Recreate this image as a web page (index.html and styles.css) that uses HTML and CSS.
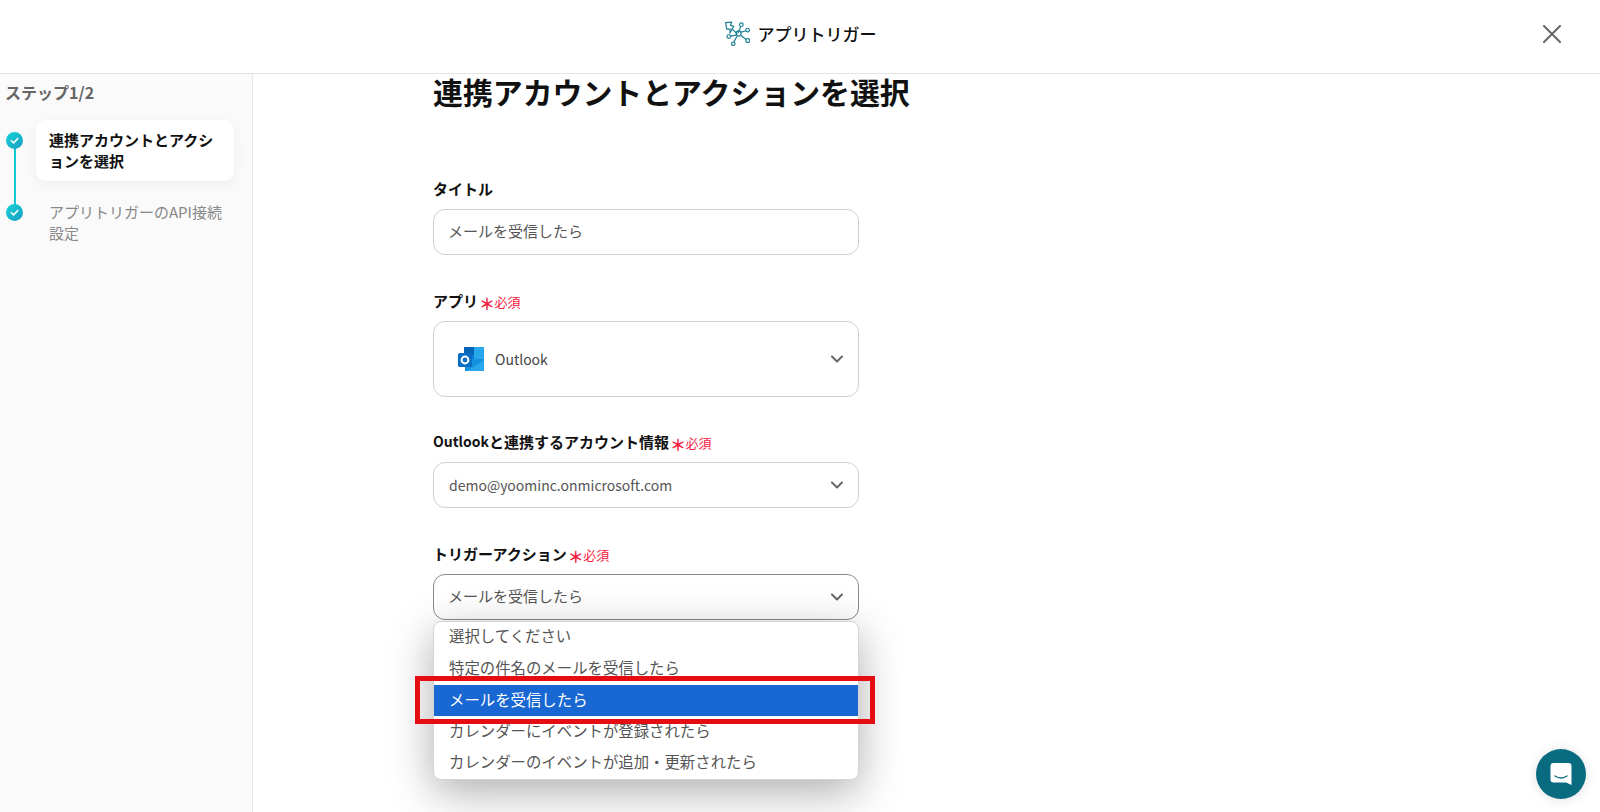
FILE: index.html
```html
<!DOCTYPE html>
<html lang="ja">

<head>
    <meta charset="UTF-8">
    <meta name="viewport" content="width=device-width, initial-scale=1.0">
    <title>アプリトリガー</title>
    <link rel="stylesheet" href="styles.css">
</head>

<body>
    <header class="topbar">
        <div class="brand">
            <svg class="brand-icon" viewBox="0 0 24 24" fill="none" stroke="#1f7f96" stroke-width="1.1">
                <path d="M1.5 1.5 L7 1 L6 4 L9 5 L5.5 11 L5.5 7.5 L2.5 7.5 Z" />
                <path d="M7 7 L12.5 12 M13 11 L15.5 5 M15 13 L20.5 17 M15 10.5 L20.5 9 M12 14 L9 19.5 M11 13 L6 14" />
                <circle cx="13.5" cy="11.5" r="2.3" />
                <circle cx="16" cy="3.4" r="1.7" />
                <circle cx="21.8" cy="8.4" r="1.7" />
                <circle cx="22" cy="18" r="1.8" />
                <circle cx="8.6" cy="21" r="1.6" />
                <circle cx="4.4" cy="14.4" r="1.7" />
            </svg>
            <span class="brand-name">アプリトリガー</span>
        </div>
        <svg class="close-icon" viewBox="0 0 18 18" stroke="#666" stroke-width="2" stroke-linecap="round">
            <path d="M1 1 L17 17 M17 1 L1 17" />
        </svg>
    </header>

    <div class="layout">
        <aside class="sidebar">
            <div class="step-count">ステップ1/2</div>
            <ol class="steps">
                <li class="step step-active">
                    <span class="step-mark">
                        <svg viewBox="0 0 18 18" fill="none" stroke="#fff" stroke-width="1.6" stroke-linecap="round" stroke-linejoin="round">
                            <path d="M5.5 9.2 L8 11.5 L12.5 6.8" />
                        </svg>
                    </span>
                    <div class="step-text">連携アカウントとアクションを選択</div>
                </li>
                <li class="step">
                    <span class="step-mark">
                        <svg viewBox="0 0 18 18" fill="none" stroke="#fff" stroke-width="1.6" stroke-linecap="round" stroke-linejoin="round">
                            <path d="M5.5 9.2 L8 11.5 L12.5 6.8" />
                        </svg>
                    </span>
                    <div class="step-text">アプリトリガーのAPI接続設定</div>
                </li>
            </ol>
        </aside>

        <main class="content">
            <h1 class="page-title">連携アカウントとアクションを選択</h1>

            <div class="field field-first">
                <div class="field-label">タイトル</div>
                <div class="control"><span class="control-text">メールを受信したら</span></div>
            </div>

            <div class="field">
                <div class="field-label">アプリ<span class="req-star">＊</span><span class="req-text">必須</span></div>
                <div class="control control-app">
                    <svg class="outlook-icon" viewBox="0 0 28 26">
                        <rect x="7" y="1" width="20" height="8" fill="#0364b8" />
                        <rect x="7" y="9" width="10" height="8" fill="#0a78d4" />
                        <rect x="17" y="1" width="10" height="8" fill="#28a8ea" />
                        <rect x="17" y="9" width="10" height="8" fill="#28a8ea" />
                        <path d="M8 13 L27 13 L27 25 L8 25 Z" fill="#1490df" />
                        <path d="M27 14 L27 25 L10 25 Z" fill="#28a8ea" />
                        <rect x="1" y="7" width="14" height="14" rx="1.5" fill="#0a6fc4" />
                        <circle cx="8" cy="14" r="3.4" fill="none" stroke="#fff" stroke-width="2" />
                    </svg>
                    <span class="latin">Outlook</span>
                    <svg class="chevron" viewBox="0 0 12 8" fill="none" stroke="#666" stroke-width="2" stroke-linecap="round" stroke-linejoin="round">
                        <path d="M1 1.5 L6 6.5 L11 1.5" />
                    </svg>
                </div>
            </div>

            <div class="field field-account">
                <div class="field-label"><span class="latin">Outlook</span>と連携するアカウント情報<span class="req-star">＊</span><span class="req-text">必須</span></div>
                <div class="control control-select">
                    <span class="latin">demo@yoominc.onmicrosoft.com</span>
                    <svg class="chevron" viewBox="0 0 12 8" fill="none" stroke="#666" stroke-width="2" stroke-linecap="round" stroke-linejoin="round">
                        <path d="M1 1.5 L6 6.5 L11 1.5" />
                    </svg>
                </div>
            </div>

            <div class="field field-open">
                <div class="field-label">トリガーアクション<span class="req-star">＊</span><span class="req-text">必須</span></div>
                <div class="control control-select control-focus">
                    <span class="control-text">メールを受信したら</span>
                    <svg class="chevron" viewBox="0 0 12 8" fill="none" stroke="#666" stroke-width="2" stroke-linecap="round" stroke-linejoin="round">
                        <path d="M1 1.5 L6 6.5 L11 1.5" />
                    </svg>
                </div>
                <ul class="menu">
                    <li class="menu-item">選択してください</li>
                    <li class="menu-item">特定の件名のメールを受信したら</li>
                    <li class="menu-item menu-item-selected">メールを受信したら</li>
                    <li class="menu-item">カレンダーにイベントが登録されたら</li>
                    <li class="menu-item">カレンダーのイベントが追加・更新されたら</li>
                </ul>
                <div class="callout"></div>
            </div>
        </main>
    </div>

    <div class="chat-button">
        <svg viewBox="0 0 24 24" width="24" height="24">
            <path d="M4.5 1 H19.5 A3 3 0 0 1 22.5 4 V23 L17 20.5 H4.5 A3 3 0 0 1 1.5 17.5 V4 A3 3 0 0 1 4.5 1 Z" fill="#fff" />
            <path d="M6 14 Q12 18 18 14" fill="none" stroke="#086b80" stroke-width="1.4" stroke-linecap="round" />
        </svg>
    </div>
</body>

</html>
```

FILE: styles.css
```css
* {
    box-sizing: border-box;
}

html, body {
    height: 100%;
}

body {
    margin: 0;
    background-color: white;
    color: #222;
    font-family: "Noto Sans CJK JP", "Noto Sans", sans-serif;
    overflow: hidden;
}

.latin {
    font-size: 14px;
}

.topbar {
    height: 74px;
    border-bottom: 1px solid #e4e4e4;
    display: flex;
    justify-content: center;
    align-items: center;
    position: relative;
}

.brand {
    display: flex;
    align-items: center;
    gap: 8px;
    margin-top: -6px;
}

.brand-icon {
    width: 26px;
    height: 26px;
}

.brand-name {
    font-size: 17px;
    font-weight: 500;
    color: #111;
}

.close-icon {
    position: absolute;
    right: 39px;
    top: 25px;
    width: 18px;
    height: 18px;
}

.layout {
    display: flex;
    height: calc(100% - 74px);
}

.sidebar {
    width: 253px;
    flex-shrink: 0;
    background-color: #fafafa;
    border-right: 1px solid #e8e8e8;
    padding: 7px 18px 0 6px;
}

.step-count {
    margin-left: -1px;
    font-size: 16px;
    font-weight: 700;
    line-height: 22px;
    color: #666;
}

.steps {
    list-style: none;
    margin: 17px 0 0;
    padding: 0;
}

.step {
    display: flex;
    align-items: flex-start;
    gap: 13px;
    position: relative;
    margin-bottom: 11px;
}

.step-mark {
    flex-shrink: 0;
    width: 17px;
    height: 17px;
    margin-top: 12px;
    border-radius: 50%;
    background: linear-gradient(135deg, #17d3d9, #1a9cc0);
    position: relative;
    z-index: 1;
}

.step-mark svg {
    display: block;
    width: 17px;
    height: 17px;
}

.step-active::after {
    content: "";
    position: absolute;
    left: 7.5px;
    top: 24px;
    width: 2px;
    height: 66px;
    background-color: #14c8d6;
}

.step-text {
    flex: 1;
    padding: 9px 4px 9px 13px;
    font-size: 15px;
    line-height: 21.4px;
    color: #888;
}

.step-active .step-text {
    padding-right: 13px;
    background-color: white;
    border-radius: 10px;
    font-weight: 700;
    color: #111;
    box-shadow: 0 4px 14px rgba(0, 0, 0, 0.05);
}

.content {
    flex: 1;
    padding-left: 180px;
}

.page-title {
    margin: -3px 0 0;
    font-size: 29.9px;
    line-height: 40px;
    font-weight: 700;
    color: #111;
}

.field {
    width: 426px;
    margin-top: 36px;
}

.field-first {
    margin-top: 68px;
}

.field-account {
    margin-top: 35px;
}

.field-open {
    position: relative;
}

.field-label {
    display: flex;
    align-items: center;
    height: 20px;
    margin-bottom: 10px;
    padding-bottom: 2px;
    font-size: 15px;
    font-weight: 700;
    color: #111;
}

.req-star {
    margin-top: 6px;
    margin-left: 1px;
    font-size: 16px;
    font-weight: 700;
    line-height: 16px;
    color: #f5223f;
}

.req-text {
    margin-top: 2px;
    margin-left: -0.5px;
    font-size: 13px;
    font-weight: 400;
    color: #f5223f;
}

.control {
    display: flex;
    align-items: center;
    height: 46px;
    padding: 0 15px;
    background-color: white;
    border: 1px solid #d0d0d0;
    border-radius: 12px;
    font-size: 15px;
    color: #555;
}

.control-text {
    padding-bottom: 3px;
    margin-left: -1px;
}

.control-select {
    justify-content: space-between;
}

.control-focus {
    border-color: #8a8a8a;
}

.control-app {
    height: 76px;
    padding: 0 15px 0 23px;
    color: #444;
}

.outlook-icon {
    width: 28px;
    height: 26px;
    margin-right: 10px;
}

.chevron {
    width: 12px;
    height: 8px;
}

.control-app .chevron {
    margin-left: auto;
}

.menu {
    list-style: none;
    margin: 0;
    padding: 1px 0 0;
    position: absolute;
    left: 0;
    right: 0;
    top: 77px;
    height: 159px;
    overflow: hidden;
    background-color: white;
    border-radius: 8px;
    border: 1px solid #d4d4d4;
    box-shadow: 0 12px 44px rgba(0, 0, 0, 0.32);
}

.menu-item {
    height: 31px;
    padding: 0 0 3px 15px;
    display: flex;
    align-items: center;
    font-size: 15.4px;
    color: #555;
}

.menu-item:nth-child(-n+2) {
    padding-bottom: 6px;
}

.menu-item:first-child {
    padding-bottom: 8px;
}

.menu-item-selected {
    background-color: #1967d2;
    color: white;
}

.callout {
    position: absolute;
    left: -18px;
    right: -16px;
    top: 132px;
    height: 48px;
    border: 5px solid #e60d12;
}

.chat-button {
    position: absolute;
    left: 1536px;
    top: 749px;
    width: 50px;
    height: 50px;
    border-radius: 50%;
    background-color: #086b80;
    display: flex;
    justify-content: center;
    align-items: center;
    box-shadow: 0 1px 12px rgba(0, 0, 0, 0.12);
}
```
